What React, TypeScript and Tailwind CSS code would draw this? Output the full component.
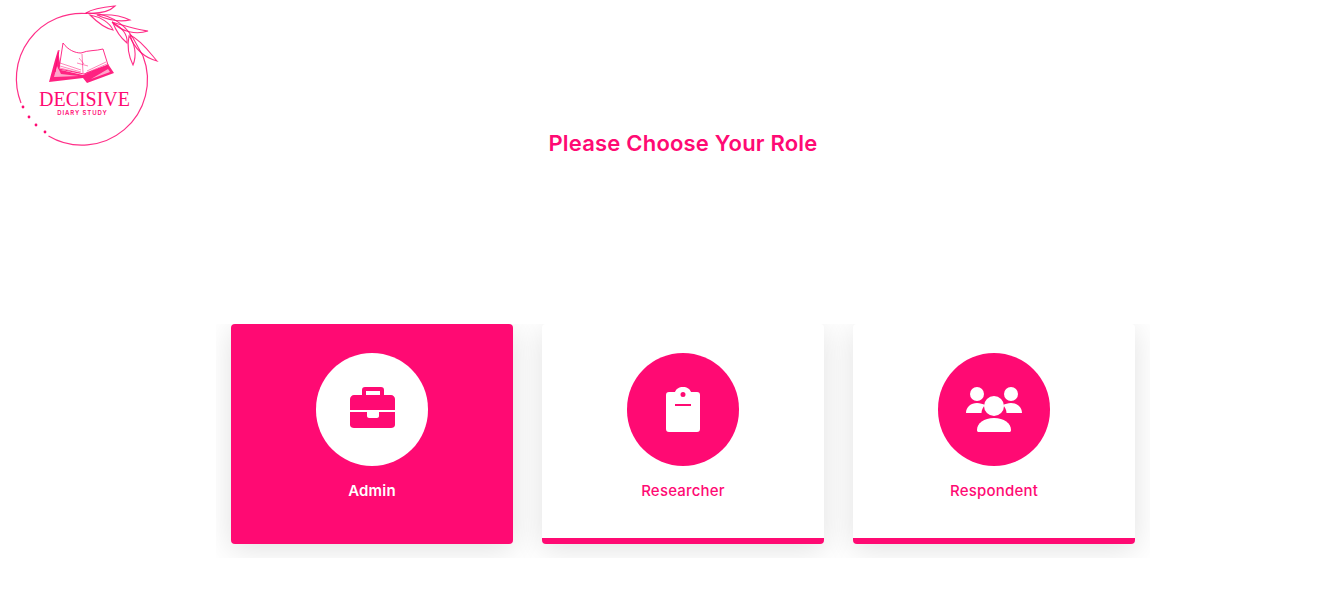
const pink = "#ff0a73";

function Logo() {
  return (
    <svg width="170" height="150" viewBox="0 0 170 150" fill="none" className="block">
      <path d="M21 103 A65.5 65.5 0 0 1 87 13.5" stroke={pink} strokeWidth="1.2" strokeOpacity="0.85" />
      <path d="M143 56 A65.5 65.5 0 0 1 48.5 136" stroke={pink} strokeWidth="1.2" strokeOpacity="0.85" />
      <circle cx="23" cy="107" r="1.4" fill={pink} />
      <circle cx="29" cy="117" r="1.4" fill={pink} />
      <circle cx="36" cy="125" r="1.4" fill={pink} />
      <circle cx="45" cy="132" r="1.4" fill={pink} />
      {/* branch */}
      <g stroke={pink} strokeWidth="1.1" strokeOpacity="0.85">
        <path d="M86 13 C105 13 122 20 133 38 L143 56" />
        <path d="M86 13 C94 8 105 7 115 6 C110 11 100 14 86 13Z" />
        <path d="M97 15 C110 14 122 16 130 20 C120 22 108 20 97 15Z" />
        <path d="M90 15 C97 22 104 28 113 30 C110 23 101 17 90 15Z" />
        <path d="M112 22 C125 26 138 30 148 31 C136 35 122 32 112 22Z" />
        <path d="M113 23 C116 31 121 38 127 43 C128 35 122 27 113 23Z" />
        <path d="M130 35 C141 40 150 53 157 61 C146 58 134 50 130 35Z" />
        <path d="M129 36 C127 46 129 57 133 65 C137 55 135 44 129 36Z" />
      </g>
      {/* book */}
      <path d="M49 82 L55 60 L58 50 L61 70 L83 75 L108 64 L114 73 L87 83 L83 78 Z" fill={pink} fillOpacity="0.9" />
      <path d="M54 77 L57 66 L61 74 L79 76 Z M91 79 L108 69 L110 72 Z" fill="#ffa6cb" />
      <path d="M59 69 L63 43 C68 50 75 53 81 53 C88 50 96 51 103 49 L108 65 L84 74 Z" fill="#fff" stroke={pink} strokeWidth="1" strokeOpacity="0.85" />
      <path d="M59 50 L55 72" stroke={pink} strokeWidth="1" />
      <path d="M82 54 L83 73" stroke={pink} strokeWidth="0.9" strokeOpacity="0.6" />
      <path
        d="M60 63 L81 70 M60 66 L81 72 M60 68 L80 73 M87 71 L106 62 M86 73 L107 64 M79 58 L84 64 M77 63 L88 66"
        stroke={pink}
        strokeWidth="0.7"
        strokeOpacity="0.7"
      />
      <text
        x="84.5"
        y="106"
        textAnchor="middle"
        textLength="91"
        lengthAdjust="spacingAndGlyphs"
        fill={pink}
        style={{ fontFamily: '"Liberation Serif", serif', fontSize: 20 }}
      >
        DECISIVE
      </text>
      <text
        x="82.5"
        y="115"
        textAnchor="middle"
        fill={pink}
        style={{ fontFamily: "Inter, sans-serif", fontSize: 6, fontWeight: 600, letterSpacing: 0.9 }}
      >
        DIARY STUDY
      </text>
    </svg>
  );
}

function ClipboardIcon() {
  return (
    <svg width="34" height="45" viewBox="0 0 34 45" fill="none">
      <path
        fillRule="evenodd"
        d="M3 5 H9 C10 2 13 0 17 0 C21 0 24 2 25 5 H31 C33 5 34 6 34 8 V42 C34 44 33 45 31 45 H3 C1 45 0 44 0 42 V8 C0 6 1 5 3 5 Z M17 5 A2.5 2.5 0 1 0 17 10 A2.5 2.5 0 1 0 17 5 Z"
        fill="#fff"
      />
      <rect x="9" y="17" width="16" height="2" fill={pink} />
    </svg>
  );
}

function GroupIcon() {
  return (
    <svg width="56" height="45" viewBox="0 0 56 45" fill="none">
      <circle cx="11" cy="7" r="7" fill="#fff" />
      <circle cx="45" cy="7" r="7" fill="#fff" />
      <path d="M0 26 C0 20 5 16 11 16 C14 16 17 17 19 18 C17 20 15.5 23 15.5 26 Z" fill="#fff" />
      <path d="M56 26 C56 20 51 16 45 16 C42 16 39 17 37 18 C39 20 40.5 23 40.5 26 Z" fill="#fff" />
      <circle cx="28" cy="19" r="10" fill="#fff" />
      <path d="M11 43 C11 36 18 31 28 31 C38 31 45 36 45 43 C45 44.5 44.5 45 43 45 H13 C11.5 45 11 44.5 11 43 Z" fill="#fff" />
    </svg>
  );
}

function BriefcaseIcon() {
  return (
    <svg width="45" height="41" viewBox="0 0 45 41" fill="none">
      <path
        fillRule="evenodd"
        d="M12 8 V3 C12 1 13 0 15 0 H31 C33 0 34 1 34 3 V8 H41 C43 8 45 10 45 12 V23 H0 V12 C0 10 2 8 4 8 Z M16 4 V8 H30 V4 Z"
        fill={pink}
      />
      <path d="M0 25 H17 V29 C17 30 18 31 19 31 H27 C28 31 29 30 29 29 V25 H45 V38 C45 40 43 41 41 41 H4 C2 41 0 40 0 38 Z" fill={pink} />
    </svg>
  );
}

function RoleCard({ label, active, icon }: { label: string; active?: boolean; icon: React.ReactNode }) {
  return (
    <div
      className={`flex h-[220px] w-[282px] flex-col items-center rounded-[4px] pt-[29px] shadow-[0_5px_30px_rgba(0,0,0,0.12)] ${
        active ? "bg-[#ff0a73]" : "border-b-[6px] border-[#ff0a73] bg-white"
      }`}
    >
      <div
        className={`flex h-[113px] w-[112px] items-start justify-center rounded-full pt-[34px] ${
          active ? "bg-white" : "bg-[#ff0a73]"
        }`}
      >
        {icon}
      </div>
      <div
        className={`mt-[15px] text-[15px] leading-[20px] tracking-[0.2px] ${
          active ? "font-semibold text-white" : "font-medium text-[#ff0a73]"
        }`}
      >
        {label}
      </div>
    </div>
  );
}

export default function App() {
  return (
    <div className="h-[593px] w-[1341px] overflow-hidden bg-white font-['Inter',sans-serif]">
      <div className="h-[130px]">
        <Logo />
      </div>
      <div className="pl-[25px]">
        <h1 className="text-center text-[22px] font-semibold leading-[27px] tracking-[0.2px] text-[#ff0a73]">
          Please Choose Your Role
        </h1>
        <div className="mx-auto mt-[167px] flex w-[934px] justify-between overflow-hidden px-[15px] pb-[14px]">
          <RoleCard label="Admin" active icon={<BriefcaseIcon />} />
          <RoleCard label="Researcher" icon={<ClipboardIcon />} />
          <RoleCard label="Respondent" icon={<GroupIcon />} />
        </div>
      </div>
    </div>
  );
}
